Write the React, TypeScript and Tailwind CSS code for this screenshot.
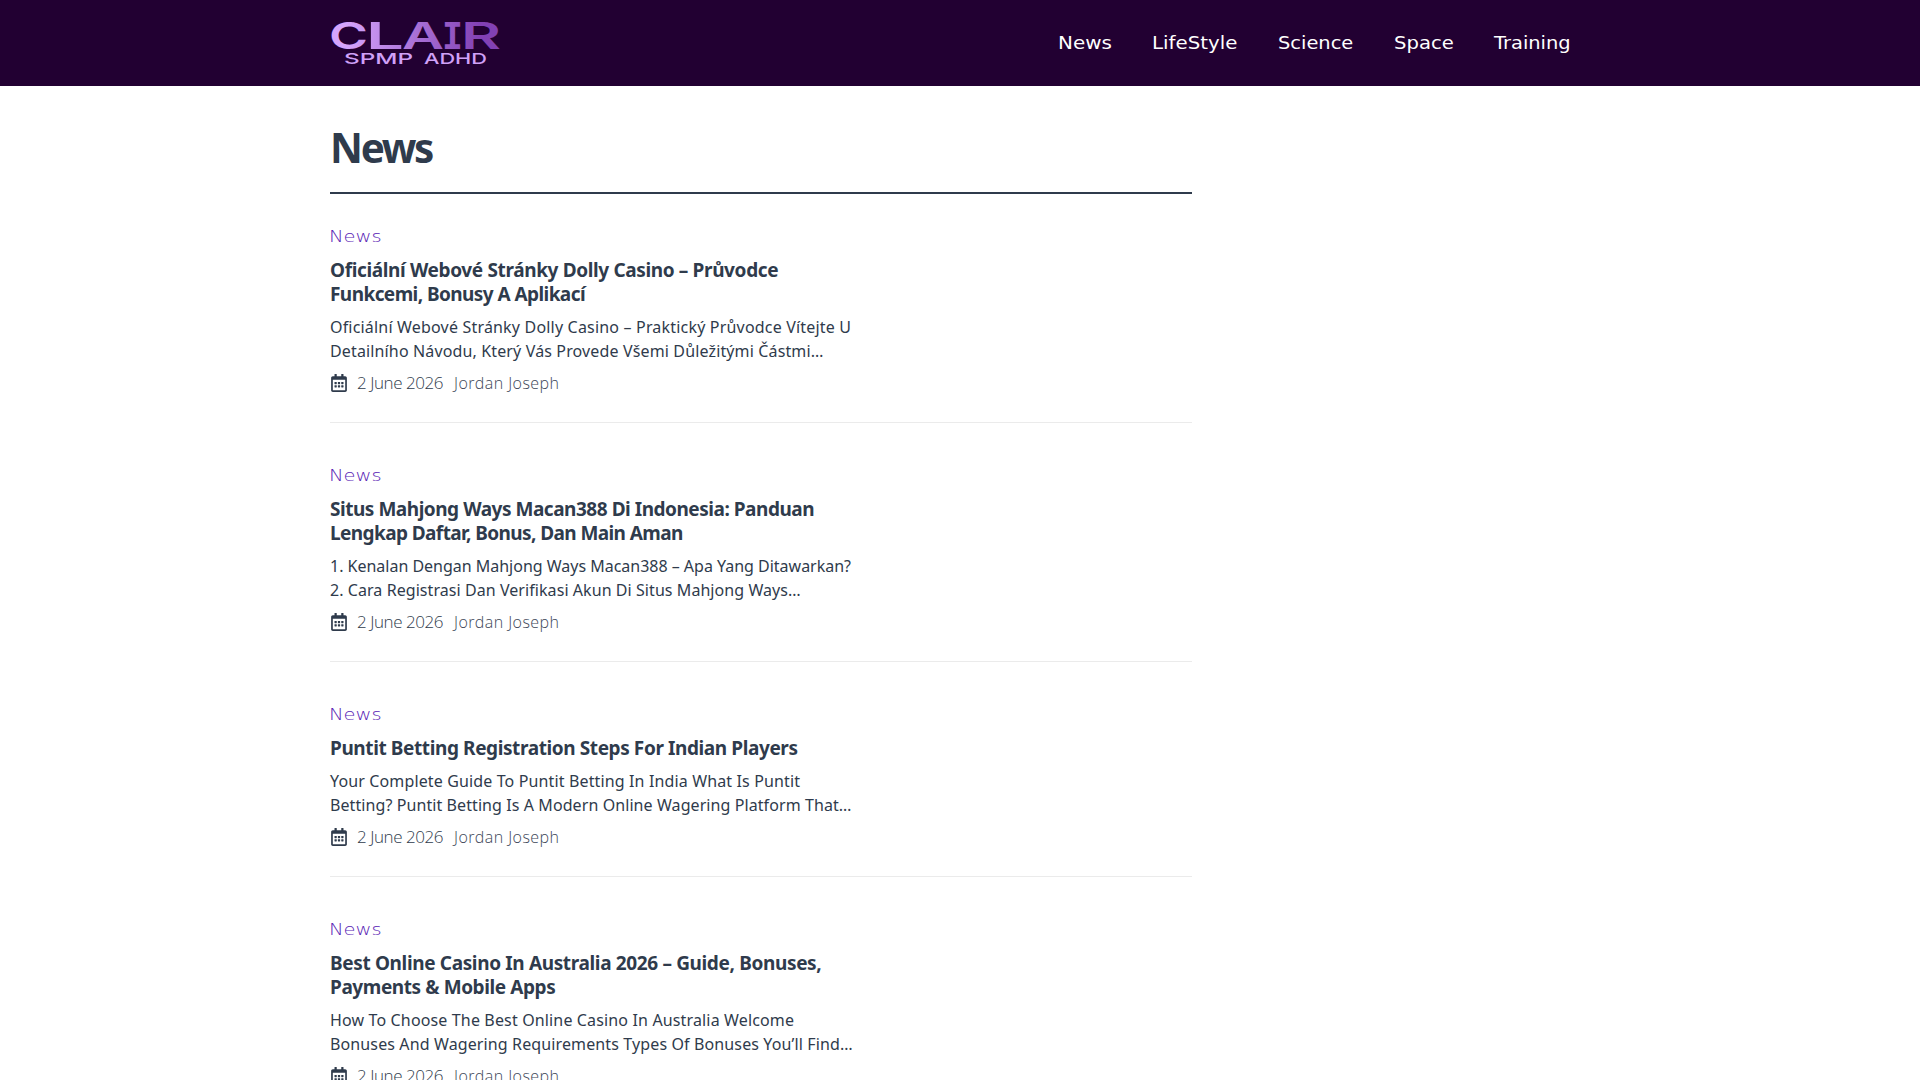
import React from 'react';
import { FaRegCalendarAlt } from 'react-icons/fa';

interface Line {
    text: string;
    tracking: string;
}

interface Post {
    id: number;
    title: Line[];
    excerpt: Line[];
}

const navItems = [
    { label: 'News', width: 'w-[54px]', stretch: 'scale-x-[1.14]' },
    { label: 'LifeStyle', width: 'w-[86px]', stretch: 'scale-x-[1.13]' },
    { label: 'Science', width: 'w-[76px]', stretch: 'scale-x-[1.11]' },
    { label: 'Space', width: 'w-[60px]', stretch: 'scale-x-[1.12]' },
    { label: 'Training', width: 'w-[76px]', stretch: 'scale-x-[1.11]' },
];

const posts: Post[] = [
    {
        id: 1,
        title: [
            { text: 'Oficiální Webové Stránky Dolly Casino – Průvodce', tracking: 'tracking-[-0.36px]' },
            { text: 'Funkcemi, Bonusy A Aplikací', tracking: 'tracking-[-0.57px]' },
        ],
        excerpt: [
            { text: 'Oficiální Webové Stránky Dolly Casino – Praktický Průvodce Vítejte U', tracking: 'tracking-[0.186px]' },
            { text: 'Detailního Návodu, Který Vás Provede Všemi Důležitými Částmi…', tracking: 'tracking-[0.14px]' },
        ],
    },
    {
        id: 2,
        title: [
            { text: 'Situs Mahjong Ways Macan388 Di Indonesia: Panduan', tracking: 'tracking-[-0.47px]' },
            { text: 'Lengkap Daftar, Bonus, Dan Main Aman', tracking: 'tracking-[-0.585px]' },
        ],
        excerpt: [
            { text: '1. Kenalan Dengan Mahjong Ways Macan388 – Apa Yang Ditawarkan?', tracking: 'tracking-[-0.013px]' },
            { text: '2. Cara Registrasi Dan Verifikasi Akun Di Situs Mahjong Ways…', tracking: 'tracking-[0.066px]' },
        ],
    },
    {
        id: 3,
        title: [
            { text: 'Puntit Betting Registration Steps For Indian Players', tracking: 'tracking-[-0.4px]' },
        ],
        excerpt: [
            { text: 'Your Complete Guide To Puntit Betting In India What Is Puntit', tracking: 'tracking-[0.136px]' },
            { text: 'Betting? Puntit Betting Is A Modern Online Wagering Platform That…', tracking: 'tracking-[0.085px]' },
        ],
    },
    {
        id: 4,
        title: [
            { text: 'Best Online Casino In Australia 2026 – Guide, Bonuses,', tracking: 'tracking-[-0.355px]' },
            { text: 'Payments & Mobile Apps', tracking: 'tracking-[-0.41px]' },
        ],
        excerpt: [
            { text: 'How To Choose The Best Online Casino In Australia Welcome', tracking: 'tracking-[0.146px]' },
            { text: 'Bonuses And Wagering Requirements Types Of Bonuses You’ll Find…', tracking: 'tracking-[0.123px]' },
        ],
    },
];

const logoLetters = [
    { char: 'C', x: 329, width: 39, font: 'Inter' },
    { char: 'L', x: 366, width: 38, font: 'Inter' },
    { char: 'A', x: 402, width: 42, font: 'Inter' },
    { char: 'I', x: 442, width: 21, font: 'DejaVu Sans Mono' },
    { char: 'R', x: 461, width: 40, font: 'Inter' },
];

const Logo = () => (
    <svg viewBox="326 12 180 60" className="h-[60px] w-[180px]" role="img" aria-label="Clair SPMP ADHD">
        <defs>
            <linearGradient id="logo-fill" gradientUnits="userSpaceOnUse" x1="345" y1="0" x2="480" y2="0">
                <stop offset="0" stopColor="#d5a5fc" />
                <stop offset="1" stopColor="#8241b4" />
            </linearGradient>
        </defs>
        <g fill="url(#logo-fill)" fontSize="37.5" fontWeight="600">
            {logoLetters.map(l => (
                <text key={l.char} x={l.x} y="49.3" fontFamily={l.font} textLength={l.width} lengthAdjust="spacingAndGlyphs">{l.char}</text>
            ))}
        </g>
        <g fill="#d0a0f8" fontSize="15" fontWeight="500" fontFamily="Inter">
            <text x="344" y="64" textLength="69" lengthAdjust="spacingAndGlyphs">SPMP</text>
            <text x="424" y="64" textLength="63" lengthAdjust="spacingAndGlyphs">ADHD</text>
        </g>
    </svg>
);

const Header = () => (
    <header className="h-[86px] bg-[#220032]">
        <div className="mx-auto flex h-full w-[1268px] items-center justify-between">
            <div className="pb-0.5"><Logo /></div>
            <nav className="flex gap-10 pr-6 font-['DejaVu_Sans',sans-serif] text-[17.5px] leading-6 text-white">
                {navItems.map(item => (
                    <a key={item.label} href="#" className={`whitespace-nowrap ${item.width}`}>
                        <span className={`inline-block origin-left ${item.stretch}`}>{item.label}</span>
                    </a>
                ))}
            </nav>
        </div>
    </header>
);

const PostItem = ({ post }: { post: Post }) => (
    <article className="mb-10 border-b border-[#ebebeb] pb-7">
        <a href="#" className="block pt-px font-['DejaVu_Sans',sans-serif] text-base font-extralight leading-6 text-[#5a25b5]">
            <span className="-ml-px inline-block origin-left scale-x-[1.22]">News</span>
        </a>
        <h2 className="mt-[9px] text-[19px] font-bold leading-6">
            {post.title.map(line => (
                <span key={line.text} className={`block whitespace-nowrap ${line.tracking}`}>{line.text}</span>
            ))}
        </h2>
        <p className="mt-[9px] text-base leading-6">
            {post.excerpt.map(line => (
                <span key={line.text} className={`block whitespace-nowrap ${line.tracking}`}>{line.text}</span>
            ))}
        </p>
        <div className="mt-[7px] flex h-6 items-center font-['Open_Sans',sans-serif] font-light leading-6">
            <FaRegCalendarAlt className="ml-px mt-0.5 h-[18px] w-4" />
            <span className="ml-2.5 w-[97px] whitespace-nowrap pt-0.5 text-[17px] tracking-[-0.45px]">2 June 2026</span>
            <span className="whitespace-nowrap pt-px tracking-[0.44px] text-[#3b4657]">Jordan Joseph</span>
        </div>
    </article>
);

export default function App() {
    return (
        <div className="h-screen overflow-hidden bg-white font-['Noto_Sans',sans-serif] text-[#2f3b4c]">
            <Header />
            <main className="mx-auto w-[1260px] pt-[37px]">
                <div className="w-[862px]">
                    <h1 className="mb-[30px] border-b-2 border-[#2f3b4c] pb-[19px] text-[40.5px] font-bold leading-[50px] tracking-[-2.3px]">News</h1>
                    {posts.map(post => <PostItem key={post.id} post={post} />)}
                </div>
            </main>
        </div>
    );
}
